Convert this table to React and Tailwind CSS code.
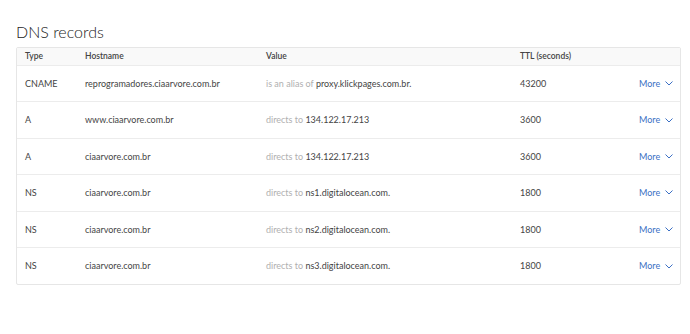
import React from 'react';

const records = [
  { type: 'CNAME', host: 'reprogramadores.ciaarvore.com.br', verb: 'is an alias of', value: 'proxy.klickpages.com.br.', ttl: '43200' },
  { type: 'A', host: 'www.ciaarvore.com.br', verb: 'directs to', value: '134.122.17.213', ttl: '3600' },
  { type: 'A', host: 'ciaarvore.com.br', verb: 'directs to', value: '134.122.17.213', ttl: '3600' },
  { type: 'NS', host: 'ciaarvore.com.br', verb: 'directs to', value: 'ns1.digitalocean.com.', ttl: '1800' },
  { type: 'NS', host: 'ciaarvore.com.br', verb: 'directs to', value: 'ns2.digitalocean.com.', ttl: '1800' },
  { type: 'NS', host: 'ciaarvore.com.br', verb: 'directs to', value: 'ns3.digitalocean.com.', ttl: '1800' },
];

const Chevron = () => (
  <svg width="8" height="5" viewBox="0 0 8 5" fill="none" className="ml-[5px]">
    <path d="M0.5 0.5 L4 4 L7.5 0.5" stroke="#3b6fc4" strokeWidth="1" />
  </svg>
);

export default function App() {
  return (
    <div className="w-[690px] h-[334px] bg-white pt-[21px] px-4 font-['Lato',sans-serif] text-[#333]">
      <h2 className="text-[16px] font-light leading-[22px] mb-[4px] text-[#222]">DNS records</h2>
      <div className="w-[665px] border border-[#e6e6e6] rounded-[2px]">
        <div className="flex items-center h-[18px] bg-[#f9f9f9] border-b border-[#ececec] text-[8.5px] font-semibold text-[#444]">
          <div className="w-[68px] pl-[8px]">Type</div>
          <div className="w-[181px]">Hostname</div>
          <div className="w-[254px]">Value</div>
          <div className="flex-1">TTL (seconds)</div>
        </div>
        {records.map((r, i) => (
          <div
            key={i}
            className={`flex items-center h-[36.4px] text-[9px] text-[#444] ${i < records.length - 1 ? 'border-b border-[#ececec]' : ''}`}
          >
            <div className="w-[68px] pl-[8px]">{r.type}</div>
            <div className="w-[181px]">{r.host}</div>
            <div className="w-[254px]">
              <span className="text-[#b0b0b0]">{r.verb} </span>
              {r.value}
            </div>
            <div className="w-[119px]">{r.ttl}</div>
            <div className="flex items-center text-[#3b6fc4]">
              More
              <Chevron />
            </div>
          </div>
        ))}
      </div>
    </div>
  );
}
